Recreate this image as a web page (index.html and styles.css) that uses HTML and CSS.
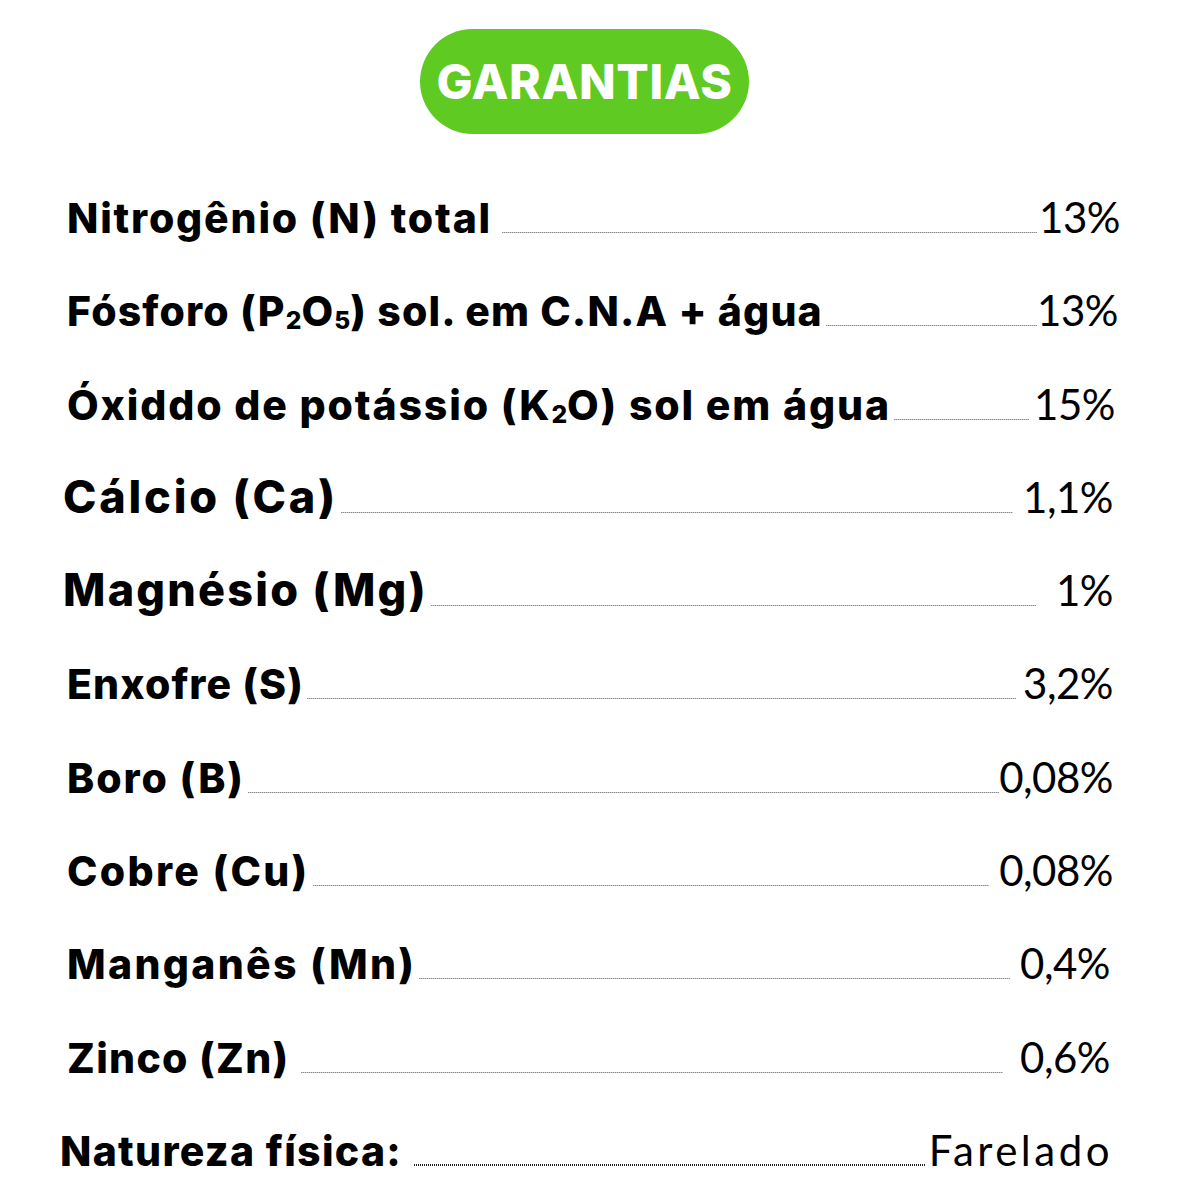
FILE: index.html
```html
<!DOCTYPE html>
<html lang="pt-BR">
<head>
<meta charset="utf-8">
<title>Garantias</title>
<link rel="stylesheet" href="styles.css">
</head>
<body>
<main class="page">
  <header class="head">
    <div class="badge">GARANTIAS</div>
  </header>
  <section class="list">
    <div class="row r1"><span class="label">Nitrogênio (N) total</span><span class="leader"></span><span class="value">13%</span></div>
    <div class="row r2"><span class="label">Fósforo (P<span class="sub">2</span>O<span class="sub">5</span>) sol. em C.N.A + água</span><span class="leader"></span><span class="value">13%</span></div>
    <div class="row r3"><span class="label">Óxiddo de potássio (K<span class="sub">2</span>O) sol em água</span><span class="leader"></span><span class="value">15%</span></div>
    <div class="row r4 big"><span class="label">Cálcio (Ca)</span><span class="leader"></span><span class="value">1,1%</span></div>
    <div class="row r5 big"><span class="label">Magnésio (Mg)</span><span class="leader"></span><span class="value">1%</span></div>
    <div class="row r6"><span class="label">Enxofre (S)</span><span class="leader"></span><span class="value">3,2%</span></div>
    <div class="row r7"><span class="label">Boro (B)</span><span class="leader"></span><span class="value">0,08%</span></div>
    <div class="row r8"><span class="label">Cobre (Cu)</span><span class="leader"></span><span class="value">0,08%</span></div>
    <div class="row r9"><span class="label">Manganês (Mn)</span><span class="leader"></span><span class="value">0,4%</span></div>
    <div class="row r10"><span class="label">Zinco (Zn)</span><span class="leader"></span><span class="value">0,6%</span></div>
    <div class="row r11 last"><span class="label">Natureza física:</span><span class="leader"></span><span class="value">Farelado</span></div>
  </section>
</main>
</body>
</html>
```

FILE: styles.css
```css
html, body {
  margin: 0;
  padding: 0;
  background: #ffffff;
}

.page {
  width: 1200px;
  height: 1200px;
  overflow: hidden;
  font-family: Inter, "Noto Sans", sans-serif;
  color: #000;
}

.head {
  padding-top: 29px;
  padding-left: 420px;
}

.badge {
  display: flex;
  align-items: center;
  justify-content: center;
  width: 329px;
  height: 105px;
  border-radius: 53px;
  background: #5fca22;
  color: #ffffff;
  font-family: Inter, sans-serif;
  font-weight: 800;
  font-size: 48px;
  letter-spacing: 0.6px;
}

.list {
  padding-top: 53px;
  padding-left: 67px;
}

.row {
  display: flex;
  align-items: baseline;
  height: 93.3px;
  line-height: 60px;
}

.label {
  font-family: Inter, sans-serif;
  font-weight: 800;
  font-size: 41px;
  letter-spacing: 1.8px;
  white-space: nowrap;
}

.big .label {
  font-size: 45px;
}

.sub {
  font-size: 0.6em;
  vertical-align: -0.12em;
  line-height: 0;
  letter-spacing: 0;
}

.leader {
  flex: 1;
  height: 1px;
  margin-left: 3px;
  background: repeating-linear-gradient(90deg, #8a8a8a 0 1px, #c8c8c8 1px 2px);
}

.value {
  font-family: Lato, "Open Sans", sans-serif;
  font-weight: 400;
  font-size: 42px;
  letter-spacing: -0.5px;
  white-space: nowrap;
}

.last .leader {
  height: 2px;
  background: repeating-linear-gradient(90deg, #222 0 1px, transparent 1px 2px);
}

.last .value {
  font-size: 42px;
  letter-spacing: 3.5px;
  margin-right: -3px;
}

.r1 { padding-right: 80px; }
.r1 .leader { margin-left: 10px; margin-right: 2px; }
.r2 { padding-right: 82px; }
.r2 .label { letter-spacing: 1.15px; }
.r3 { padding-right: 85px; }
.r3 .label { letter-spacing: 1.85px; }
.r3 .leader { margin-right: 5px; }
.r4 { margin-left: -4px; padding-right: 87px; }
.r4 .label { letter-spacing: 2.8px; }
.r4 .leader { margin-right: 10px; }
.r5 { margin-left: -4px; padding-right: 87px; }
.r5 .label { letter-spacing: 2.2px; }
.r5 .leader { margin-right: 20px; }
.r6 { padding-right: 87px; }
.r6 .label { letter-spacing: 1.1px; }
.r6 .leader { margin-right: 7px; }
.r7 { padding-right: 87px; }
.r7 .label { letter-spacing: 1.9px; }
.r8 { padding-right: 87px; }
.r8 .label { letter-spacing: 2.3px; }
.r8 .leader { margin-right: 10px; }
.r9 { padding-right: 90px; }
.r9 .label { letter-spacing: 2.3px; }
.r9 .leader { margin-right: 10px; }
.r10 { padding-right: 90px; }
.r10 .label { letter-spacing: 1.3px; }
.r10 .leader { margin-left: 12px; margin-right: 17px; }
.r11 { margin-left: -7px; padding-right: 90px; }
.r11 .label { letter-spacing: 1.3px; }
.r11 .leader { margin-left: 12px; margin-right: 3px; }
```
